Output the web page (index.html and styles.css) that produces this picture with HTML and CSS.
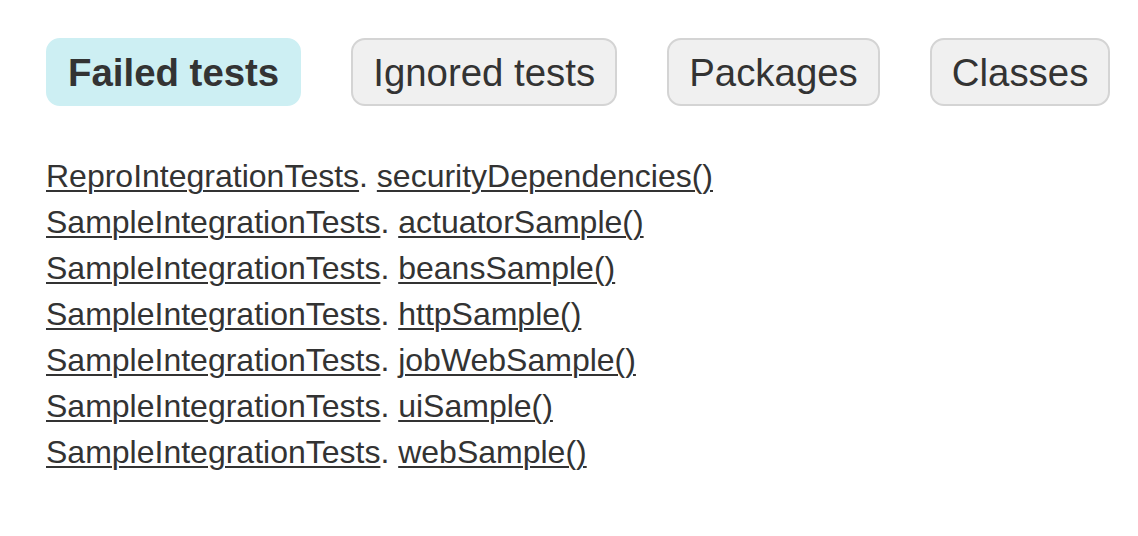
FILE: index.html
```html
<!DOCTYPE html>
<html>
<head>
<meta charset="utf-8">
<link rel="stylesheet" href="styles.css">
</head>
<body>
<div class="page">
  <ul class="tabs">
    <li class="tab selected"><h2>Failed tests</h2></li>
    <li class="tab"><a href="#">Ignored tests</a></li>
    <li class="tab"><a href="#">Packages</a></li>
    <li class="tab"><a href="#">Classes</a></li>
  </ul>
  <ul class="links">
    <li><a href="#">ReproIntegrationTests</a>. <a href="#">securityDependencies()</a></li>
    <li><a href="#">SampleIntegrationTests</a>. <a href="#">actuatorSample()</a></li>
    <li><a href="#">SampleIntegrationTests</a>. <a href="#">beansSample()</a></li>
    <li><a href="#">SampleIntegrationTests</a>. <a href="#">httpSample()</a></li>
    <li><a href="#">SampleIntegrationTests</a>. <a href="#">jobWebSample()</a></li>
    <li><a href="#">SampleIntegrationTests</a>. <a href="#">uiSample()</a></li>
    <li><a href="#">SampleIntegrationTests</a>. <a href="#">webSample()</a></li>
  </ul>
</div>
</body>
</html>
```

FILE: styles.css
```css
html, body {
  margin: 0;
  padding: 0;
  background: #ffffff;
}
body {
  font-family: "Liberation Sans", Arial, Helvetica, sans-serif;
  font-size: 32px;
  color: #333333;
}
.page {
  padding: 38px 0 0 46px;
}
.tabs {
  display: flex;
  gap: 50px;
  margin: 0;
  padding: 0;
  list-style: none;
}
.tab {
  padding: 11px 20px 9px;
  border: 2px solid #d4d4d4;
  border-radius: 14px;
  background: #f0f0f0;
  font-size: 38.4px;
  line-height: 44px;
}
.tab.selected {
  background: #cdeff3;
  border-color: #cdeff3;
}
.tab h2 {
  margin: 0;
  font-size: 38.4px;
  font-weight: bold;
  color: #333333;
}
.tab a {
  color: #333333;
  text-decoration: none;
}
.links {
  list-style: none;
  margin: 52px 0 0 0;
  padding: 0;
}
.links li {
  line-height: 36px;
  margin-bottom: 10px;
}
.links a {
  color: #333333;
  text-decoration: underline;
  text-decoration-thickness: 2px;
  text-underline-offset: 3px;
}
```
